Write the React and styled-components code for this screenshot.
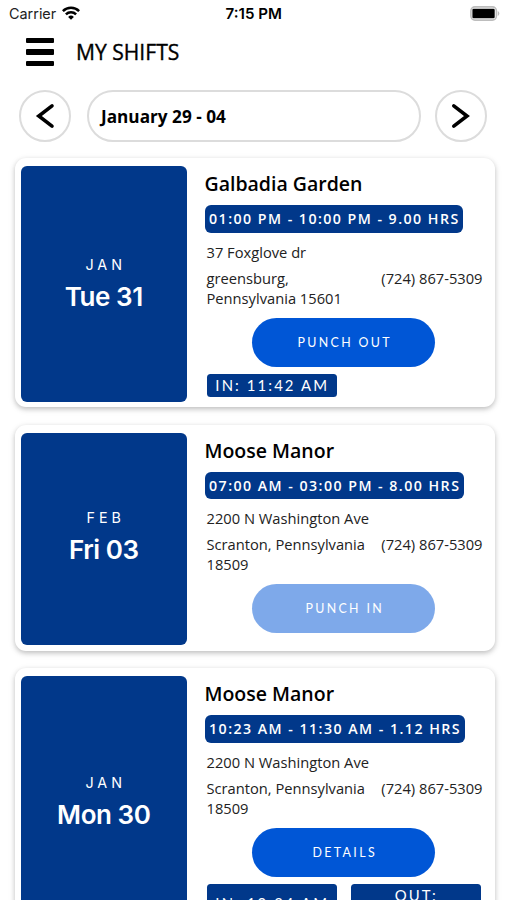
import React from "react";
import styled, { createGlobalStyle } from "styled-components";

const navy = "#01388a";
const blue = "#0056d6";

const GlobalStyle = createGlobalStyle`
  * { box-sizing: border-box; }
  html, body { margin: 0; padding: 0; background: #fff; }
  body { overflow: hidden; font-family: "Open Sans", sans-serif; color: #000; }
  button { font: inherit; color: inherit; margin: 0; padding: 0; border: 0; background: none; }
`;

const Screen = styled.main`
  width: 507px;
  height: 900px;
  overflow: hidden;
  display: flex;
  flex-direction: column;
`;

const StatusBar = styled.div`
  display: grid;
  grid-template-columns: 1fr auto 1fr;
  align-items: center;
  height: 28px;
  padding: 0 7px 0 9px;
  flex: none;
  font-family: Inter, sans-serif;
`;

const Carrier = styled.div`
  display: flex;
  align-items: center;
  gap: 6px;
  font-size: 14.4px;
  margin-top: -1px;
  color: #222;
  svg { display: block; margin-top: -1px; }
`;

const Clock = styled.div`
  font-size: 15.1px;
  font-weight: 600;
  padding-right: 1.5px;
  margin-top: -1px;
`;

const Battery = styled.svg`
  justify-self: end;
  margin-top: -2px;
`;

const Header = styled.header`
  display: flex;
  align-items: center;
  gap: 22px;
  height: 48px;
  padding-left: 26px;
  flex: none;
`;

const MenuButton = styled.button`
  display: flex;
  flex-direction: column;
  gap: 6px;
  width: 28px;
`;

const MenuBar = styled.span`
  height: 5.2px;
  border-radius: 1px;
  background: #000;
`;

const PageTitle = styled.h1`
  margin: 0;
  font-size: 21.1px;
  line-height: 28px;
  font-weight: 500;
  -webkit-text-stroke: 0.35px #000;
`;

const WeekPicker = styled.nav`
  display: flex;
  gap: 15px;
  padding: 14px 20px 0 19px;
  flex: none;
`;

const RoundButton = styled.button`
  display: grid;
  place-items: center;
  width: 52px;
  height: 52px;
  flex: none;
  border: 2px solid #dcdcdc;
  border-radius: 50%;
`;

const WeekField = styled.div`
  flex: 1;
  display: flex;
  align-items: center;
  height: 52px;
  margin: 0 -1px 0 1px;
  padding-left: 12px;
  border: 2px solid #dcdcdc;
  border-radius: 26px;
  font-size: 17.2px;
  font-weight: 700;
`;

const ShiftList = styled.section`
  display: flex;
  flex-direction: column;
  gap: 17.5px;
  padding: 16px 12px 0 15px;
`;

const Card = styled.article`
  display: flex;
  flex: none;
  height: ${(p) => p.$height}px;
  padding: 8px 12.5px 5.5px 5.5px;
  border-radius: 11px;
  background: #fff;
  box-shadow: 0 2px 5px rgba(0, 0, 0, 0.22), 0 2px 10px rgba(0, 0, 0, 0.06);
`;

const DatePanel = styled.div`
  display: flex;
  flex-direction: column;
  align-items: center;
  justify-content: center;
  width: 166.5px;
  flex: none;
  padding-bottom: ${(p) => p.$lift || 0}px;
  border-radius: 6px;
  background: ${navy};
  color: #fff;
  font-family: Inter, sans-serif;
`;

const Month = styled.div`
  font-size: 14.3px;
  line-height: 20px;
  letter-spacing: 4px;
  padding-left: 4px;
  margin-bottom: 6px;
`;

const Day = styled.div`
  font-size: 26px;
  line-height: 32px;
  font-weight: 600;
  letter-spacing: -0.45px;
`;

const Details = styled.div`
  flex: 1;
  min-width: 0;
  padding-left: 17.5px;
`;

const Place = styled.h2`
  margin: 4px 0 0;
  font-size: 19.5px;
  line-height: 28px;
  font-weight: 600;
`;

const TimeBadge = styled.div`
  display: flex;
  align-items: center;
  width: max-content;
  height: 27.5px;
  margin-top: 7px;
  padding: 0 3.5px 0 4.5px;
  border-radius: 6px;
  background: ${navy};
  color: #fff;
  font-size: 14.2px;
  font-weight: 600;
  letter-spacing: 1.46px;
  white-space: nowrap;
`;

const Address = styled.div`
  display: grid;
  grid-template-columns: 1fr auto;
  column-gap: 10px;
  row-gap: 6px;
  margin: 9px 0 0 2px;
  font-size: 14.7px;
  line-height: 20px;
  color: #222;
`;

const Street = styled.div`
  grid-column: 1 / -1;
`;

const City = styled.div`
  white-space: pre-line;
`;

const Action = styled.button`
  display: block;
  width: 183.5px;
  height: 49px;
  margin: 10.3px 0 0 47px;
  border-radius: 24.5px;
  background: ${blue};
  opacity: ${(p) => (p.disabled ? 0.5 : 1)};
  color: #fff;
  font-family: Lato, sans-serif;
  font-size: 12.4px;
  letter-spacing: 2.35px;
  text-indent: 3px;
`;

const Punches = styled.div`
  display: flex;
  align-items: stretch;
  gap: 14px;
  margin: 7px 0 0 2px;
`;

const Punch = styled.div`
  display: flex;
  align-items: center;
  justify-content: center;
  width: 130px;
  padding: 3.5px 0 3.5px 1.5px;
  border-radius: 3.5px;
  background: ${navy};
  color: #fff;
  font-family: Lato, sans-serif;
  font-size: 14.9px;
  line-height: 16px;
  letter-spacing: 2.1px;
  text-align: center;
  white-space: pre-line;
`;

const shifts = [
  {
    month: "JAN", day: "Tue 31", place: "Galbadia Garden",
    time: "01:00 PM - 10:00 PM - 9.00 HRS",
    street: "37 Foxglove dr", city: "greensburg,\nPennsylvania 15601",
    action: "PUNCH OUT", punches: ["IN: 11:42 AM"], height: 249,
  },
  {
    month: "FEB", day: "Fri 03", place: "Moose Manor",
    time: "07:00 AM - 03:00 PM - 8.00 HRS",
    street: "2200 N Washington Ave", city: "Scranton, Pennsylvania\n18509",
    action: "PUNCH IN", disabled: true, punches: [], height: 226, lift: 3,
  },
  {
    month: "JAN", day: "Mon 30", place: "Moose Manor",
    time: "10:23 AM - 11:30 AM - 1.12 HRS",
    street: "2200 N Washington Ave", city: "Scranton, Pennsylvania\n18509",
    action: "DETAILS", punches: ["IN: 10:24 AM", "OUT:\n11:30 AM"], height: 266,
  },
];

function WifiIcon() {
  return (
    <svg width="18" height="14" viewBox="0 0 18 14" fill="none" stroke="#000" strokeWidth="2.5">
      <path d="M0.9 5.1a11.4 11.4 0 0 1 16.2 0" />
      <path d="M3.9 8.4a7.2 7.2 0 0 1 10.2 0" />
      <path d="M9 13.8 6.1 10.9a4.1 4.1 0 0 1 5.8 0z" fill="#000" stroke="none" />
    </svg>
  );
}

function Chevron({ right }) {
  return (
    <svg width="20" height="26" viewBox="0 0 20 26" fill="none" stroke="#000" strokeWidth="3.6" strokeLinecap="round" strokeLinejoin="miter">
      <path d={right ? "M2.8 2.8 16 13 2.8 23.2" : "M17 2.8 3.8 13 17 23.2"} />
    </svg>
  );
}

function ShiftCard({ shift }) {
  return (
    <Card $height={shift.height}>
      <DatePanel $lift={shift.lift}>
        <Month>{shift.month}</Month>
        <Day>{shift.day}</Day>
      </DatePanel>
      <Details>
        <Place>{shift.place}</Place>
        <TimeBadge>{shift.time}</TimeBadge>
        <Address>
          <Street>{shift.street}</Street>
          <City>{shift.city}</City>
          <div>(724) 867-5309</div>
        </Address>
        <Action disabled={shift.disabled}>{shift.action}</Action>
        <Punches>
          {shift.punches.map((p) => <Punch key={p}>{p}</Punch>)}
        </Punches>
      </Details>
    </Card>
  );
}

export default function App() {
  return (
    <Screen>
      <GlobalStyle />
      <StatusBar>
        <Carrier>Carrier <WifiIcon /></Carrier>
        <Clock>7:15 PM</Clock>
        <Battery width="31" height="15" viewBox="0 0 31 15">
          <rect x="1.9" y="0.9" width="25.5" height="13.2" rx="4" fill="#fff" stroke="#bdbdbd" strokeWidth="1.6" />
          <rect x="3.4" y="2.8" width="22.3" height="9.4" rx="1.2" fill="#000" />
          <path d="M28.8 5v5a2.8 2.8 0 0 0 0-5z" fill="#bdbdbd" />
        </Battery>
      </StatusBar>
      <Header>
        <MenuButton aria-label="Menu"><MenuBar /><MenuBar /><MenuBar /></MenuButton>
        <PageTitle>MY SHIFTS</PageTitle>
      </Header>
      <WeekPicker>
        <RoundButton aria-label="Previous week"><Chevron /></RoundButton>
        <WeekField>January 29 - 04</WeekField>
        <RoundButton aria-label="Next week"><Chevron right /></RoundButton>
      </WeekPicker>
      <ShiftList>
        {shifts.map((s) => <ShiftCard key={s.time} shift={s} />)}
      </ShiftList>
    </Screen>
  );
}
